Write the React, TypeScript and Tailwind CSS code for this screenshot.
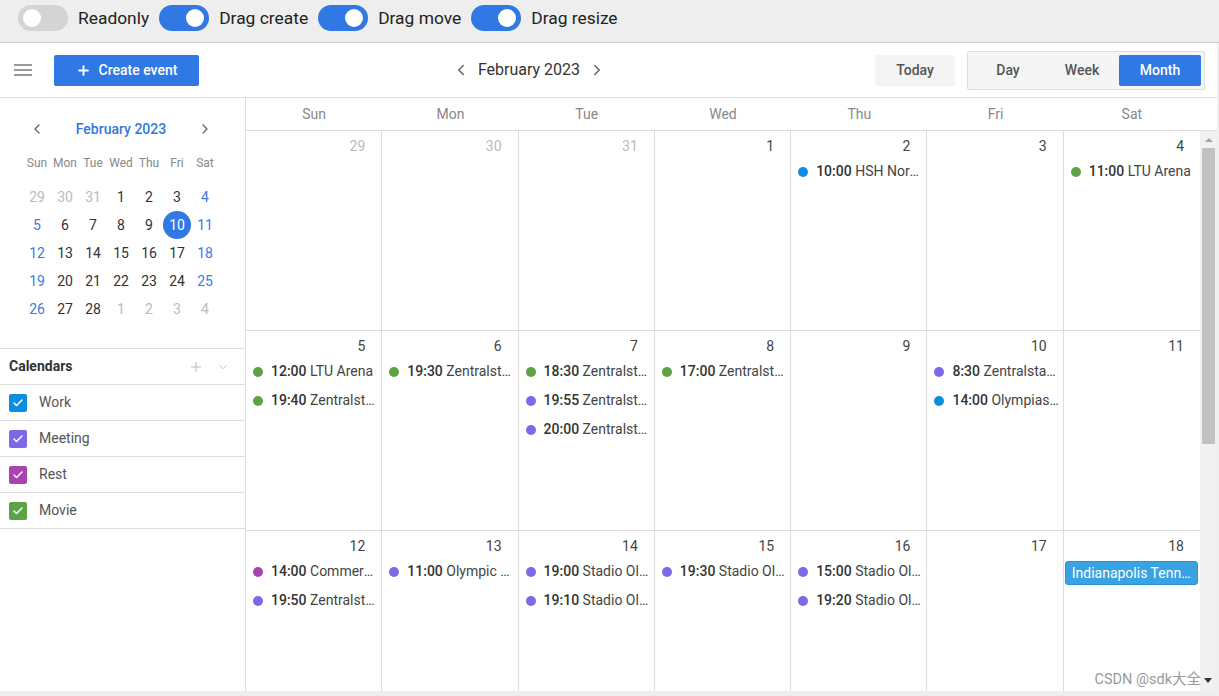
import { ChevronLeft, ChevronRight, ChevronDown, Plus, Check } from "lucide-react";

type Ev = { time: string; title: string; dot: string };
type Day = { n: number; muted?: boolean; events?: Ev[]; allDay?: string };

const GREEN = "bg-[#5ca346]";
const PURPLE = "bg-[#7d68ea]";
const BLUE = "bg-[#0d8de0]";
const MAGENTA = "bg-[#a843b0]";

const weeks: Day[][] = [
    [
        { n: 29, muted: true },
        { n: 30, muted: true },
        { n: 31, muted: true },
        { n: 1 },
        { n: 2, events: [{ time: "10:00", title: "HSH Nordbank Arena", dot: BLUE }] },
        { n: 3 },
        { n: 4, events: [{ time: "11:00", title: "LTU Arena", dot: GREEN }] },
    ],
    [
        {
            n: 5,
            events: [
                { time: "12:00", title: "LTU Arena", dot: GREEN },
                { time: "19:40", title: "Zentralstadion", dot: GREEN },
            ],
        },
        { n: 6, events: [{ time: "19:30", title: "Zentralstadion", dot: GREEN }] },
        {
            n: 7,
            events: [
                { time: "18:30", title: "Zentralstadion", dot: GREEN },
                { time: "19:55", title: "Zentralstadion", dot: PURPLE },
                { time: "20:00", title: "Zentralstadion", dot: PURPLE },
            ],
        },
        { n: 8, events: [{ time: "17:00", title: "Zentralstadion", dot: GREEN }] },
        { n: 9 },
        {
            n: 10,
            events: [
                { time: "8:30", title: "Zentralstadion", dot: PURPLE },
                { time: "14:00", title: "Olympiastadion", dot: BLUE },
            ],
        },
        { n: 11 },
    ],
    [
        {
            n: 12,
            events: [
                { time: "14:00", title: "Commerzbank-Arena", dot: MAGENTA },
                { time: "19:50", title: "Zentralstadion", dot: PURPLE },
            ],
        },
        { n: 13, events: [{ time: "11:00", title: "Olympic Stadium", dot: PURPLE }] },
        {
            n: 14,
            events: [
                { time: "19:00", title: "Stadio Olimpico", dot: PURPLE },
                { time: "19:10", title: "Stadio Olimpico", dot: PURPLE },
            ],
        },
        { n: 15, events: [{ time: "19:30", title: "Stadio Olimpico", dot: PURPLE }] },
        {
            n: 16,
            events: [
                { time: "15:00", title: "Stadio Olimpico", dot: PURPLE },
                { time: "19:20", title: "Stadio Olimpico", dot: PURPLE },
            ],
        },
        { n: 17 },
        { n: 18, allDay: "Indianapolis Tennis Center" },
    ],
    [
        { n: 19 }, { n: 20 }, { n: 21 }, { n: 22 }, { n: 23 }, { n: 24 }, { n: 25 },
    ],
    [
        { n: 26 }, { n: 27 }, { n: 28 },
        { n: 1, muted: true }, { n: 2, muted: true }, { n: 3, muted: true }, { n: 4, muted: true },
    ],
];

const dayNames = ["Sun", "Mon", "Tue", "Wed", "Thu", "Fri", "Sat"];

const calendars = [
    { name: "Work", color: "bg-[#0b8de0]" },
    { name: "Meeting", color: "bg-[#7d68ea]" },
    { name: "Rest", color: "bg-[#a843b0]" },
    { name: "Movie", color: "bg-[#5ca346]" },
];

function Toggle({ on, label }: { on: boolean; label: string }) {
    return (
        <div className="flex items-center gap-[10px]">
            <div
                className={
                    on
                        ? "flex h-[26px] w-[50px] items-center justify-end rounded-full bg-[#3078e3] px-[5px]"
                        : "flex h-[26px] w-[50px] items-center justify-start rounded-full bg-[#d4d4d4] px-[5px]"
                }
            >
                <div className="h-[18px] w-[18px] rounded-full bg-white" />
            </div>
            <span className="text-[17.4px] text-[#222]">{label}</span>
        </div>
    );
}

function MiniCalendar() {
    return (
        <div className="px-[23px] pt-[19px] pb-[25px]">
            <div className="flex h-[24px] w-[196px] items-center justify-between px-[6px]">
                <ChevronLeft size={16} strokeWidth={2} className="text-[#666]" />
                <span className="text-[14px] font-medium text-[#3078e3]">February 2023</span>
                <ChevronRight size={16} strokeWidth={2} className="text-[#666]" />
            </div>
            <div className="mt-[13px] grid w-[196px] grid-cols-7 text-center text-[12px] text-[#888]">
                {dayNames.map((d) => (
                    <div key={d} className="h-[18px] leading-[18px]">{d}</div>
                ))}
            </div>
            <div className="mt-[11px] grid w-[196px] grid-cols-7 text-center text-[14px]">
                {weeks.flat().map((d, i) => {
                    const weekend = i % 7 === 0 || i % 7 === 6;
                    const selected = !d.muted && d.n === 10;
                    let cls = "text-[#333]";
                    if (d.muted) cls = "text-[#bbb]";
                    else if (weekend) cls = "text-[#3a7be0]";
                    return (
                        <div key={i} className="flex h-[28px] items-center justify-center">
                            {selected ? (
                                <span className="flex h-[28px] w-[28px] items-center justify-center rounded-full bg-[#3078e3] text-white">
                                    {d.n}
                                </span>
                            ) : (
                                <span className={cls}>{d.n}</span>
                            )}
                        </div>
                    );
                })}
            </div>
        </div>
    );
}

function Sidebar() {
    return (
        <div className="w-[246px] shrink-0 border-r border-[#ddd] bg-white">
            <MiniCalendar />
            <div className="border-t border-[#ddd]">
                <div className="flex h-[36px] items-center justify-between border-b border-[#ddd] pl-[9px] pr-[15px]">
                    <span className="text-[14px] font-bold text-[#333]">Calendars</span>
                    <div className="flex items-center gap-[12px] text-[#bbb]">
                        <Plus size={16} strokeWidth={1.5} />
                        <ChevronDown size={14} strokeWidth={1.5} />
                    </div>
                </div>
                {calendars.map((c) => (
                    <div key={c.name} className="flex h-[36px] items-center gap-[12px] border-b border-[#ddd] pl-[9px]">
                        <span className={"flex h-[18px] w-[18px] items-center justify-center rounded-[2px] " + c.color}>
                            <Check size={12} strokeWidth={3} className="text-white" />
                        </span>
                        <span className="text-[14px] text-[#555]">{c.name}</span>
                    </div>
                ))}
            </div>
        </div>
    );
}

function DayCell({ d }: { d: Day }) {
    return (
        <div className="h-[200px] min-w-0 border-r border-b border-[#ddd] last:border-r-0">
            <div className={"h-[26px] pr-[16px] pt-[5px] text-right text-[14px] leading-[20px] " + (d.muted ? "text-[#bbb]" : "text-[#444]")}>
                {d.n}
            </div>
            {d.events?.map((e, i) => (
                <div key={i} className="flex h-[29px] items-center gap-[8px] pl-[7px] pr-[3px]">
                    <span className={"h-[10px] w-[10px] shrink-0 rounded-full " + e.dot} />
                    <span className="min-w-0 truncate text-[14px] text-[#444]">
                        <span className="font-medium text-[#333]">{e.time}</span> {e.title}
                    </span>
                </div>
            ))}
            {d.allDay && (
                <div className="ml-px mr-[2px] mt-[4px] flex h-[24px] items-center rounded-[3px] border border-[#2d93d8] bg-[#38a2e3] px-[6px]">
                    <span className="truncate text-[14px] text-white">{d.allDay}</span>
                </div>
            )}
        </div>
    );
}

function MonthView() {
    return (
        <div className="flex min-w-0 flex-1 flex-col">
            <div className="flex h-[33px] shrink-0 border-b border-[#ddd] bg-white">
                <div className="grid flex-1 grid-cols-7">
                    {dayNames.map((d) => (
                        <div key={d} className="flex items-center justify-center text-[14px] text-[#888]">{d}</div>
                    ))}
                </div>
                <div className="w-[17px]" />
            </div>
            <div className="flex min-h-0 flex-1">
                <div className="min-h-0 flex-1 overflow-hidden bg-white">
                    {weeks.map((w, i) => (
                        <div key={i} className="grid grid-cols-7">
                            {w.map((d, j) => (
                                <DayCell key={j} d={d} />
                            ))}
                        </div>
                    ))}
                </div>
                <div className="flex w-[17px] shrink-0 flex-col bg-[#f1f1f1]">
                    <div className="flex h-[17px] items-center justify-center">
                        <div className="h-0 w-0 border-x-[4px] border-b-[4px] border-x-transparent border-b-[#a3a3a3]" />
                    </div>
                    <div className="mx-[2px] h-[296px] bg-[#c1c1c1]" />
                </div>
            </div>
        </div>
    );
}

export default function App() {
    return (
        <div className="relative h-[696px] w-full overflow-hidden bg-[#eee] font-['Roboto',sans-serif]">
            <div className="flex h-[43px] items-start gap-[10px] border-b border-[#ccc] pl-[18px] pt-[5px]">
                <Toggle on={false} label="Readonly" />
                <Toggle on label="Drag create" />
                <Toggle on label="Drag move" />
                <Toggle on label="Drag resize" />
            </div>
            <div className="flex h-[648px] w-[1217px] flex-col bg-white">
                <div className="flex h-[55px] shrink-0 items-center border-b border-[#ddd] pl-[14px] pr-[12px]">
                    <div className="flex flex-col gap-[3px]">
                        <div className="h-[2px] w-[18px] bg-[#999]" />
                        <div className="h-[2px] w-[18px] bg-[#999]" />
                        <div className="h-[2px] w-[18px] bg-[#999]" />
                    </div>
                    <button className="ml-[22px] flex h-[31px] w-[145px] items-center justify-center gap-[8px] rounded-[2px] bg-[#3078e3] text-[14px] font-medium text-white">
                        <Plus size={15} strokeWidth={3} />
                        Create event
                    </button>
                    <div className="flex flex-1 items-center justify-center gap-[8px] pr-[16px] text-[#333]">
                        <ChevronLeft size={18} strokeWidth={2} className="text-[#666]" />
                        <span className="text-[16px]">February 2023</span>
                        <ChevronRight size={18} strokeWidth={2} className="text-[#666]" />
                    </div>
                    <button className="flex h-[31px] w-[80px] items-center justify-center rounded-[2px] bg-[#f4f4f4] text-[14px] font-medium text-[#555]">
                        Today
                    </button>
                    <div className="ml-[12px] flex h-[39px] items-center rounded-[2px] border border-[#ddd] bg-[#f5f5f5] px-[3px]">
                        <button className="flex h-[31px] w-[74px] items-center justify-center text-[14px] font-medium text-[#555]">Day</button>
                        <button className="flex h-[31px] w-[74px] items-center justify-center text-[14px] font-medium text-[#555]">Week</button>
                        <button className="flex h-[31px] w-[82px] items-center justify-center rounded-[2px] bg-[#3078e3] text-[14px] font-medium text-white">Month</button>
                    </div>
                </div>
                <div className="flex min-h-0 flex-1">
                    <Sidebar />
                    <MonthView />
                </div>
            </div>
            <div className="absolute bottom-[5px] right-[7px] flex items-center gap-[3px] font-['Roboto','Noto_Sans_CJK_SC',sans-serif] text-[14.5px] text-[#999]">
                <span>CSDN @sdk大全</span>
                <div className="h-0 w-0 border-x-[4px] border-t-[5px] border-x-transparent border-t-[#333]" />
            </div>
        </div>
    );
}
